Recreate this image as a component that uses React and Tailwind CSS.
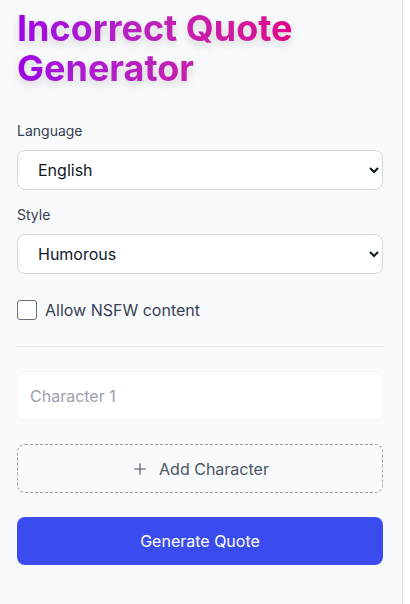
import { Plus } from "lucide-react";

const LANGUAGES = ["English", "Spanish", "French", "German"];
const STYLES = ["Humorous", "Dramatic", "Wholesome", "Sarcastic"];

function Field({ label, options }) {
  return (
    <div>
      <label className="block text-sm text-gray-700 mb-[9px]">{label}</label>
      <select className="w-full h-10 px-4 text-base text-gray-900 bg-white border border-gray-300 rounded-lg outline-none">
        {options.map((o) => (
          <option key={o}>{o}</option>
        ))}
      </select>
    </div>
  );
}

export default function App() {
  return (
    <div className="h-[604px] overflow-hidden bg-white flex" style={{ fontFamily: "Inter, 'Noto Sans', sans-serif" }}>
      <div className="w-[403px] shrink-0 h-full bg-gray-50 border-r border-gray-200 pl-[17px] pr-[19px] pt-2">
        <h1 className="text-4xl leading-10 font-bold bg-gradient-to-r from-[#9d00e6] to-[#e0008a] bg-clip-text text-transparent drop-shadow-lg w-fit">
          Incorrect Quote
          <br />
          Generator
        </h1>

        <div className="mt-[33px] space-y-[15px]">
          <Field label="Language" options={LANGUAGES} />
          <Field label="Style" options={STYLES} />
        </div>

        <label className="flex items-center gap-2 mt-6 text-base text-gray-700">
          <span className="w-5 h-5 border border-gray-500 rounded-[3px] bg-white" />
          Allow NSFW content
        </label>

        <div className="border-t border-gray-200 mt-6" />

        <input
          placeholder="Character 1"
          className="mt-6 w-full h-[49px] px-3 text-base bg-white border border-gray-100 rounded-lg placeholder:text-gray-400 outline-none"
        />

        <button className="mt-6 w-full h-[49px] flex items-center justify-center gap-2.5 border border-dashed border-gray-400 rounded-lg text-base text-gray-600">
          <Plus className="w-[18px] h-[18px]" strokeWidth={1.5} />
          Add Character
        </button>

        <button className="mt-6 w-full h-12 bg-[#3a4cee] rounded-lg text-base text-white">
          Generate Quote
        </button>
      </div>
    </div>
  );
}
